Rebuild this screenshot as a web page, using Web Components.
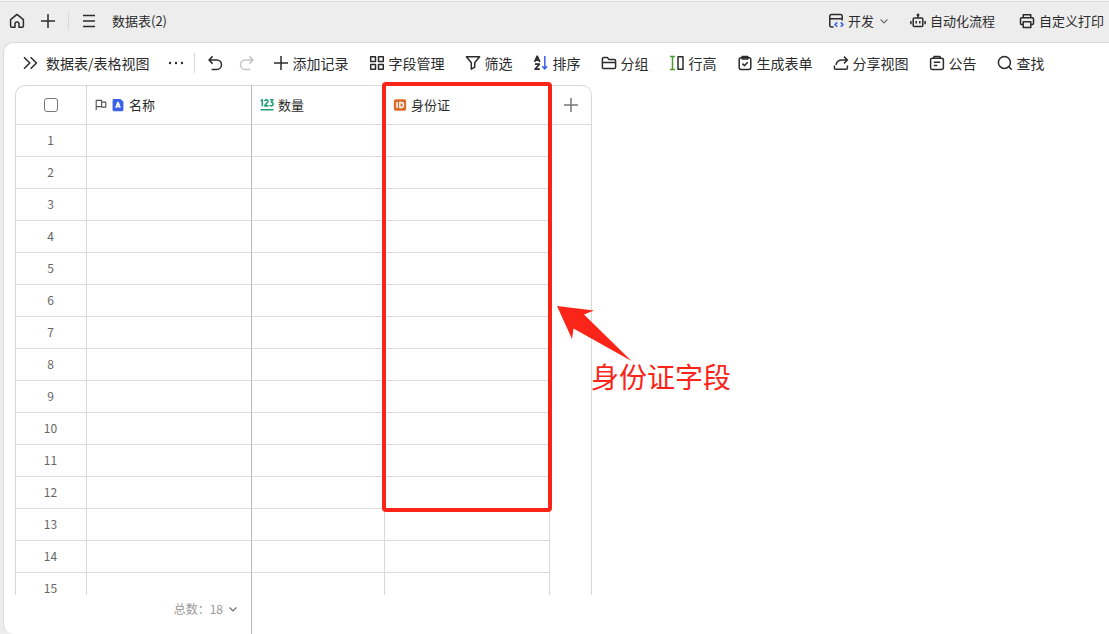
<!DOCTYPE html>
<html lang="zh-CN">
<head>
<meta charset="utf-8">
<meta name="viewport" content="width=device-width, initial-scale=1">
<title>数据表(2)</title>
<style>
  html,
  body {
    margin: 0;
    height: 100%;
  }

  body {
    font-family: "Noto Sans CJK SC", sans-serif;
    font-size: 14px;
    line-height: 20px;
    color: #2b2b2b;
    background: #ededed;
    overflow: hidden;
  }
</style>
</head>
<body>
<sheet-app></sheet-app>

<script>
const Colors = {
    line: '#d9d9d9',
    lineDark: '#b9b9bd',
    red: '#fa2418',
};

// every icon is drawn on a 16px grid
const Icons = {
    home: '<path d="M1.600 6.600 8 1.400l6.400 5.200v6.400c0 .8-.5 1.300-1.300 1.300H10v-3.400a2 2 0 0 0-4 0v3.400H2.900c-.8 0-1.300-.5-1.300-1.300z"/>',
    plus: '<path d="M8 1v14M1 8h14"/>',
    menu: '<path d="M2 2.500h12M2 8h12M2 13.500h12"/>',
    expand: '<path d="m2 2.200 5.800 5.800L2 13.800M8.600 2.200 14.400 8l-5.800 5.800"/>',
    more: '<g fill="currentColor" stroke="none"><circle cx="2" cy="8" r="1.200"/><circle cx="8" cy="8" r="1.200"/><circle cx="14" cy="8" r="1.200"/></g>',
    undo: '<path d="M5.600 1.400 2 5l3.600 3.600M2 5h7.800a4.700 4.700 0 0 1 0 9.400H4.600"/>',
    redo: '<path d="M10.400 1.400 14 5l-3.600 3.600M14 5H6.200a4.700 4.700 0 0 0 0 9.400h5"/>',
    grid: '<path d="M1.700 1.700h4.800v4.800H1.700zM9.500 1.700h4.800v4.800H9.500zM1.700 9.500h4.800v4.800H1.700zM9.500 9.500h4.800v4.800H9.500z"/>',
    filter: '<path d="M1.400 1.800h13.200l-4.900 6v4.400l-3.400 2V7.800z"/>',
    sort: '<path d="M1.600 6.800 4.200 1.200l2.600 5.600M2.400 5.200H6M2 9.200h4.400L2 14.200h4.800" stroke-width="1.700"/><path d="M11.800 1v12.600M9.200 11.200l2.600 2.800 2.200-2.800" stroke="#3b60ea"/>',
    folder: '<path d="M1.400 3.800c0-.9.5-1.400 1.400-1.400h3.400l1.900 2h5.100c.9 0 1.400.5 1.400 1.400v6.400c0 .9-.5 1.400-1.400 1.400H2.800c-.9 0-1.400-.5-1.400-1.400zM1.400 7.400h13.200"/>',
    height: '<path d="M1 1.600h5M1 14.400h5M3.500 1.600v12.800" stroke="#4f9a35"/><path d="M9 1.800h5v12.400H9z"/>',
    form: '<rect x="2.200" y="2.800" width="11.600" height="11.600" rx="1.800"/><path d="M5.200 1.400h5.600v2.600H5.200zM5.400 8.600l2 2 3.400-3.400"/>',
    share: '<path d="M11 1.600 14.400 5 11 8.400M14.200 5H9.400C5.600 5 3.400 7 3 10M1.400 10.600v2.400c0 .8.5 1.300 1.300 1.300h10.400c.8 0 1.300-.5 1.300-1.300v-2.400"/>',
    notice: '<rect x="1.600" y="3.200" width="12.800" height="11.200" rx="1.600"/><path d="M5 3V1.400h6V3M4.800 7.200h6.400M4.800 10.400h3.600"/>',
    search: '<circle cx="7.400" cy="7.400" r="6"/><path d="m11.800 11.800 3 3"/>',
    dev: '<path d="M5.600 14H3.400c-1 0-1.600-.6-1.600-1.600V3.200c0-1 .6-1.600 1.600-1.600h9.200c1 0 1.600.6 1.600 1.600v4.200M1.800 5.800h12.400"/><path d="M9.200 9.400 7 11.600l2.200 2.200M12.800 9.400l2.200 2.200-2.200 2.200" stroke="#3b60ea"/>',
    robot: '<rect x="3.200" y="5" width="9.600" height="8.600" rx="1"/><path d="M8 2.200V5M6.200 8v2.600M9.800 8v2.600M.9 8v3.200M15.100 8v3.200"/><circle cx="8" cy="2" r=".7"/>',
    printer: '<path d="M4.200 4.800v-3h7.600v3M4.200 11.400H2.600c-.7 0-1.100-.4-1.100-1.100V6c0-.7.4-1.200 1.100-1.200h10.800c.7 0 1.100.5 1.100 1.200v4.300c0 .7-.4 1.100-1.100 1.100h-1.600M4.200 8.800h7.600v5.600H4.200z"/>',
    down: '<path d="m3.400 6 4.600 4.400L12.600 6"/>',
    flag: '<path d="M1.600 15V1.800h7.200v8.400H1.600M8.800 4.200h5.600v6.600H8.800z"/>',
    text: '<path d="M3.400 1h7.400L14.200 4.400v9c0 .9-.6 1.600-1.600 1.600H3.400c-1 0-1.600-.7-1.600-1.600V2.600C1.800 1.700 2.400 1 3.400 1z" fill="#3b60ea" stroke="none"/><path d="M5.500 11.200 8 5l2.500 6.200M6.500 9.600h3" stroke="#fff" stroke-width="1.700"/>',
    number: '<g stroke="#25a077" stroke-width="1.800"><path d="M.8 3.400 2.600 2v7.400M5.400 3.600c.2-2 3.800-2 3.800.2 0 1.600-3.600 3.600-3.800 5.200h4.200M11.400 2h3.400l-2 2.800c3 0 2.800 4.200 0 4.200-.8 0-1.400-.2-1.800-.8M.6 13.400h14.800"/></g>',
    idcard: '<rect x="1" y="1.400" width="14" height="13.200" rx="2" fill="#dc6a29" stroke="none"/><path d="M4.600 4.600v6.800M7.800 5.200h1.600c3.400 0 3.400 5.600 0 5.600H7.800z" stroke="#fff" stroke-width="1.700"/>',
};

class SheetIcon extends HTMLElement {
    static get observedAttributes() {
        return ['name'];
    }
    constructor() {
        super();
        this.attachShadow({ mode: 'open' });
    }
    connectedCallback() {
        this.render();
    }
    attributeChangedCallback() {
        this.render();
    }
    render() {
        this.shadowRoot.innerHTML = `
          <style>
            :host {
              display: block;
              flex: none;
              width: var(--icon-size, 16px);
              height: var(--icon-size, 16px);
            }

            svg {
              display: block;
              width: 100%;
              height: 100%;
              fill: none;
              stroke: currentColor;
              stroke-width: 1.5;
              stroke-linejoin: round;
            }
          </style>
          <svg viewBox="0 0 16 16" aria-hidden="true">${Icons[this.getAttribute('name')] || ''}</svg>
        `;
    }
}

// icon button, with its caption in the slot
class ToolButton extends HTMLElement {
    constructor() {
        super();
        this.attachShadow({ mode: 'open' });
    }
    connectedCallback() {
        const label = this.getAttribute('label');
        this.shadowRoot.innerHTML = `
          <style>
            :host {
              display: block;
              flex: none;
            }

            button {
              display: flex;
              align-items: center;
              gap: 4px;
              margin: 0;
              padding: 0;
              border: none;
              background: none;
              font: inherit;
              color: inherit;
              white-space: nowrap;
              cursor: pointer;
            }

            button:disabled {
              color: #c4c4c4;
              cursor: default;
            }

            .arrow {
              --icon-size: 12px;
              color: #666;
            }
          </style>
          <button type="button" ${label ? `aria-label="${label}"` : ''} ${this.hasAttribute('disabled') ? 'disabled' : ''}>
            ${this.hasAttribute('icon') ? `<sheet-icon name="${this.getAttribute('icon')}"></sheet-icon>` : ''}
            <slot></slot>
            ${this.hasAttribute('menu') ? '<sheet-icon class="arrow" name="down"></sheet-icon>' : ''}
          </button>
        `;
    }
}

class TopBar extends HTMLElement {
    constructor() {
        super();
        this.attachShadow({ mode: 'open' }).innerHTML = `
          <style>
            :host {
              display: block;
              flex: none;
              border-top: 1px solid #f7f7f7;
              font-size: 13px;
            }

            header {
              display: flex;
              align-items: center;
              justify-content: space-between;
              height: 38px;
              padding: 0 5px 2px 9px;
              border-top: 1px solid #dedede;
            }

            nav {
              display: flex;
              align-items: center;
              gap: 15px;
            }

            nav.actions {
              gap: 24px;
            }

            nav.actions tool-button[menu] {
              margin-right: -4px;
            }

            i {
              width: 1px;
              height: 18px;
              margin: 0 -3px;
              background: ${Colors.line};
            }
          </style>
          <header>
            <nav>
              <tool-button icon="home" label="首页"></tool-button>
              <tool-button icon="plus" label="新建"></tool-button>
              <i></i>
              <tool-button icon="menu" label="目录"></tool-button>
              <span>数据表(2)</span>
            </nav>
            <nav class="actions">
              <tool-button icon="dev" menu>开发</tool-button>
              <tool-button icon="robot">自动化流程</tool-button>
              <tool-button icon="printer">自定义打印</tool-button>
            </nav>
          </header>
        `;
    }
}

class ViewToolbar extends HTMLElement {
    constructor() {
        super();
        this.attachShadow({ mode: 'open' }).innerHTML = `
          <style>
            :host {
              display: flex;
              flex: none;
              align-items: center;
              gap: 18px;
              height: 40px;
              padding: 0 0 2px 18px;
            }

            div {
              display: flex;
              align-items: center;
            }

            .view {
              gap: 8px;
            }

            .history {
              gap: 16px;
            }

            .tools {
              gap: 20px;
            }

            i {
              width: 1px;
              height: 20px;
              margin: 0 -6px 0 -8px;
              background: ${Colors.line};
            }
          </style>
          <div class="view">
            <tool-button icon="expand" label="展开"></tool-button>
            <span>数据表/表格视图</span>
          </div>
          <tool-button icon="more" label="更多"></tool-button>
          <i></i>
          <div class="history">
            <tool-button icon="undo" label="撤销"></tool-button>
            <tool-button icon="redo" label="重做" disabled></tool-button>
          </div>
          <div class="tools">
            <tool-button icon="plus">添加记录</tool-button>
            <tool-button icon="grid">字段管理</tool-button>
            <tool-button icon="filter">筛选</tool-button>
            <tool-button icon="sort">排序</tool-button>
            <tool-button icon="folder">分组</tool-button>
            <tool-button icon="height">行高</tool-button>
            <tool-button icon="form">生成表单</tool-button>
            <tool-button icon="share">分享视图</tool-button>
            <tool-button icon="notice">公告</tool-button>
            <tool-button icon="search">查找</tool-button>
          </div>
        `;
    }
}

const fields = [
    { name: '名称', icon: 'text', flag: true, width: 165 },
    { name: '数量', icon: 'number', width: 133 },
    { name: '身份证', icon: 'idcard', width: 165 },
];
const rowCount = 15;

const makeHead = (field) => `
  <th scope="col">
    <div class="field">
      ${field.flag ? '<sheet-icon class="flag" name="flag"></sheet-icon>' : ''}
      <sheet-icon name="${field.icon}"></sheet-icon>
      <span>${field.name}</span>
    </div>
  </th>
`;

const makeRow = (number) => `
  <tr>
    <td class="number">${number}</td>
    ${fields.map(() => '<td></td>').join('')}
    <td class="rest"></td>
  </tr>
`;

class DataGrid extends HTMLElement {
    constructor() {
        super();
        const rows = Array.from({ length: rowCount }, (_, i) => makeRow(i + 1)).join('');
        this.attachShadow({ mode: 'open' }).innerHTML = `
          <style>
            :host {
              display: flex;
              flex-direction: column;
              position: relative;
              flex: 1;
              min-height: 0;
              padding-left: 11px;
            }

            .rows {
              flex: 1;
              min-height: 0;
              overflow: hidden;
            }

            table {
              width: 577px;
              table-layout: fixed;
              border-collapse: separate;
              border-spacing: 0;
            }

            th,
            td {
              box-sizing: border-box;
              height: 32px;
              padding: 0;
              border-left: 1px solid ${Colors.line};
              border-bottom: 1px solid ${Colors.line};
              font-weight: 400;
            }

            th {
              height: 40px;
              border-top: 1px solid ${Colors.line};
              font-size: 13px;
              text-align: left;
            }

            th:first-child {
              border-top-left-radius: 10px;
            }

            th:last-child {
              border-top-right-radius: 10px;
            }

            th:last-child,
            td:last-child {
              border-right: 1px solid ${Colors.line};
            }

            th:nth-child(3),
            td:nth-child(3) {
              border-left-color: ${Colors.lineDark};
            }

            .rest {
              border-bottom: none;
            }

            .number {
              padding: 0 1px 2px 0;
              font-size: 12px;
              color: #666;
              text-align: center;
            }

            .field {
              display: flex;
              align-items: center;
              gap: 4px;
              padding-left: 8px;
              --icon-size: 14px;
            }

            .flag {
              --icon-size: 12px;
              color: #555;
            }

            .center {
              display: flex;
              justify-content: center;
            }

            .add {
              color: #777;
            }

            input {
              appearance: none;
              box-sizing: border-box;
              width: 14px;
              height: 14px;
              margin: 0;
              border: 1px solid #777;
              border-radius: 3px;
              background: #fff;
            }

            footer {
              flex: none;
              height: 39px;
            }

            .total {
              display: flex;
              box-sizing: border-box;
              justify-content: flex-end;
              width: 237px;
              height: 100%;
              padding: 4px 12px 0 0;
              border-right: 1px solid ${Colors.lineDark};
              font-size: 12px;
              color: #999;
            }
          </style>
          <div class="rows">
            <table>
              <colgroup>
                <col style="width: 71px">
                ${fields.map(({ width }) => `<col style="width: ${width}px">`).join('')}
                <col>
              </colgroup>
              <thead>
                <tr>
                  <th><div class="center"><input type="checkbox" aria-label="全选"></div></th>
                  ${fields.map(makeHead).join('')}
                  <th><div class="center add"><tool-button icon="plus" label="添加字段"></tool-button></div></th>
                </tr>
              </thead>
              <tbody>${rows}</tbody>
            </table>
          </div>
          <footer>
            <div class="total"><tool-button menu>总数：18</tool-button></div>
          </footer>
          <slot></slot>
        `;
    }
}

// red frame over a column, with an arrow and a note beside it
class FieldCallout extends HTMLElement {
    constructor() {
        super();
        this.attachShadow({ mode: 'open' }).innerHTML = `
          <style>
            :host {
              position: absolute;
              top: -3px;
              left: 378px;
              display: flex;
              color: ${Colors.red};
              pointer-events: none;
            }

            .frame {
              box-sizing: border-box;
              width: 170px;
              height: 430px;
              border: 4px solid;
              border-radius: 4px;
            }

            .note {
              padding: 223px 0 0 5px;
            }

            svg {
              display: block;
              width: 76px;
              height: 56px;
            }

            span {
              display: block;
              padding-left: 34px;
              font-size: 28px;
              line-height: 30px;
              white-space: nowrap;
            }
          </style>
          <div class="frame"></div>
          <div class="note">
            <svg viewBox="0 0 76 56" aria-hidden="true"><path d="M0 1 37 5.500 27 9.500 74.500 56 16.500 23.500 15 34z" fill="currentColor"/></svg>
            <span><slot></slot></span>
          </div>
        `;
    }
}

class SheetApp extends HTMLElement {
    constructor() {
        super();
        this.attachShadow({ mode: 'open' }).innerHTML = `
          <style>
            :host {
              display: flex;
              flex-direction: column;
              height: 100vh;
            }

            main {
              display: flex;
              flex: 1;
              flex-direction: column;
              min-height: 0;
              margin-left: 3px;
              border: 1px solid ${Colors.line};
              border-right: none;
              border-bottom: none;
              border-radius: 10px 0 0 10px;
              background: #fff;
            }
          </style>
          <top-bar></top-bar>
          <main>
            <view-toolbar></view-toolbar>
            <data-grid>
              <field-callout>身份证字段</field-callout>
            </data-grid>
          </main>
        `;
    }
}

window.customElements.define('sheet-icon', SheetIcon);
window.customElements.define('tool-button', ToolButton);
window.customElements.define('top-bar', TopBar);
window.customElements.define('view-toolbar', ViewToolbar);
window.customElements.define('field-callout', FieldCallout);
window.customElements.define('data-grid', DataGrid);
window.customElements.define('sheet-app', SheetApp);
</script>
</body>
</html>
